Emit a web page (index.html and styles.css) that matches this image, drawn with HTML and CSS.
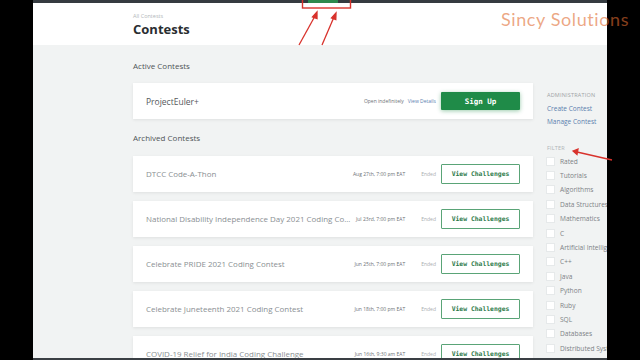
FILE: index.html
```html
<!DOCTYPE html>
<html lang="en">
<head>
    <meta charset="UTF-8">
    <meta name="viewport" content="width=device-width, initial-scale=1.0">
    <title>Contests</title>
    <link rel="stylesheet" href="styles.css">
</head>
<body>
    <div class="screen">
        <div class="topbar"><span class="topbar-tab"></span></div>
        <div class="header">
            <div class="crumb">All Contests</div>
            <h1>Contests</h1>
        </div>
        <div class="page">
            <div class="main">
                <h2 class="section-title">Active Contests</h2>
                <div class="card">
                    <span class="card-title active">ProjectEuler+</span>
                    <span class="meta">Open indefinitely</span>
                    <a class="details" href="#">View Details</a>
                    <button class="btn-signup">Sign Up</button>
                </div>

                <h2 class="section-title archived">Archived Contests</h2>
                <div class="list">
                    <div class="card">
                        <span class="card-title">DTCC Code-A-Thon</span>
                        <span class="meta date">Aug 27th, 7:00 pm EAT</span>
                        <span class="meta ended">Ended</span>
                        <button class="btn-view">View Challenges</button>
                    </div>
                    <div class="card">
                        <span class="card-title">National Disability Independence Day 2021 Coding Co...</span>
                        <span class="meta date">Jul 23rd, 7:00 pm EAT</span>
                        <span class="meta ended">Ended</span>
                        <button class="btn-view">View Challenges</button>
                    </div>
                    <div class="card">
                        <span class="card-title">Celebrate PRIDE 2021 Coding Contest</span>
                        <span class="meta date">Jun 25th, 7:00 pm EAT</span>
                        <span class="meta ended">Ended</span>
                        <button class="btn-view">View Challenges</button>
                    </div>
                    <div class="card">
                        <span class="card-title">Celebrate Juneteenth 2021 Coding Contest</span>
                        <span class="meta date">Jun 18th, 7:00 pm EAT</span>
                        <span class="meta ended">Ended</span>
                        <button class="btn-view">View Challenges</button>
                    </div>
                    <div class="card">
                        <span class="card-title">COVID-19 Relief for India Coding Challenge</span>
                        <span class="meta date">Jun 16th, 9:30 am EAT</span>
                        <span class="meta ended">Ended</span>
                        <button class="btn-view">View Challenges</button>
                    </div>
                </div>
            </div>

            <div class="sidebar">
                <div class="side-label">Administration</div>
                <a class="side-link" href="#">Create Contest</a>
                <a class="side-link" href="#">Manage Contest</a>
                <div class="side-label filter">Filter</div>
                <ul class="filters">
                    <li><span class="box"></span>Rated</li>
                    <li><span class="box"></span>Tutorials</li>
                    <li><span class="box"></span>Algorithms</li>
                    <li><span class="box"></span>Data Structures</li>
                    <li><span class="box"></span>Mathematics</li>
                    <li><span class="box"></span>C</li>
                    <li><span class="box"></span>Artificial Intelligence</li>
                    <li><span class="box"></span>C++</li>
                    <li><span class="box"></span>Java</li>
                    <li><span class="box"></span>Python</li>
                    <li><span class="box"></span>Ruby</li>
                    <li><span class="box"></span>SQL</li>
                    <li><span class="box"></span>Databases</li>
                    <li><span class="box"></span>Distributed Systems</li>
                </ul>
            </div>
        </div>
        <div class="bottombar"></div>
    </div>

    <div class="watermark">Sincy Solutions</div>

    <svg class="annotations" width="640" height="360" viewBox="0 0 640 360">
        <rect x="302.5" y="-2" width="48" height="10" fill="none" stroke="#d8322c" stroke-width="1.4"/>
        <g stroke="#d8322c" stroke-width="1.3" fill="#d8322c">
            <line x1="299" y1="45" x2="315" y2="16"/>
            <polygon points="317,12 312.5,17 317,18.5"/>
            <line x1="322" y1="45" x2="334" y2="17"/>
            <polygon points="336,13 331.5,18 335.8,19.5"/>
            <line x1="612" y1="160" x2="577" y2="152"/>
            <polygon points="573,151 578,149 577,154.5"/>
        </g>
    </svg>
</body>
</html>
```

FILE: styles.css
```css
body {
    margin: 0;
    width: 640px;
    height: 360px;
    background: #000;
    overflow: hidden;
    font-family: 'Open Sans', 'Noto Sans', sans-serif;
    position: relative;
}
.screen {
    margin-left: 33px;
    width: 574px;
    height: 360px;
    background: #f1f3f3;
    display: flex;
    flex-direction: column;
    overflow: hidden;
}
.topbar {
    height: 3px;
    flex-shrink: 0;
    background: #353b40;
    padding-left: 275px;
}
.topbar-tab {
    display: block;
    width: 30px;
    height: 3px;
    background: #2c8a4e;
}
.header {
    height: 42px;
    flex-shrink: 0;
    background: #fff;
    padding: 9px 0 0 100px;
    box-sizing: border-box;
}
.crumb {
    font-size: 5.5px;
    line-height: 8px;
    color: #b3b7ba;
}
h1 {
    margin: 1px 0 0;
    font-size: 13px;
    line-height: 16px;
    font-weight: 700;
    color: #2a2e31;
}
.page {
    flex: 1;
    min-height: 0;
    display: flex;
    padding-left: 100px;
    overflow: hidden;
}
.main {
    width: 400px;
    flex-shrink: 0;
    padding-top: 15px;
}
.section-title {
    margin: 0 0 11px;
    font-size: 8px;
    line-height: 12px;
    font-weight: 400;
    color: #4f5357;
}
.section-title.archived {
    margin: 13px 0 12px;
}
.list {
    display: flex;
    flex-direction: column;
    gap: 9px;
}
.card {
    height: 36px;
    flex-shrink: 0;
    background: #fff;
    box-shadow: 0 1px 3px rgba(0, 0, 0, 0.08);
    display: flex;
    align-items: center;
    padding: 0 13px;
    box-sizing: border-box;
}
.card-title {
    margin-right: 2px;
    font-size: 7.95px;
    color: #8a8f93;
    white-space: nowrap;
}
.card-title.active {
    color: #54585c;
    font-size: 8.5px;
}
.meta {
    font-size: 5px;
    color: #6c7175;
    white-space: nowrap;
    flex-shrink: 0;
}
.card-title + .meta {
    margin-left: auto;
}
.date {
    margin-right: 16px;
}
.ended {
    color: #a9adb0;
    margin-right: 5px;
}
.details {
    font-size: 5px;
    color: #5b80b0;
    text-decoration: none;
    margin: 0 5px 0 4px;
}
button {
    width: 79px;
    flex-shrink: 0;
    font-family: 'DejaVu Sans Mono', monospace;
    font-weight: bold;
    cursor: pointer;
    padding: 0;
}
.btn-signup {
    height: 18px;
    background: #1f8b48;
    color: #fff;
    border: none;
    border-radius: 1px;
    font-size: 7.5px;
    box-shadow: 0 1px 4px rgba(31, 139, 72, 0.45);
}
.btn-view {
    height: 20px;
    background: #fff;
    color: #2e7a4a;
    border: 1px solid #5aa477;
    border-radius: 1px;
    font-size: 6.4px;
}
.sidebar {
    margin-left: 14px;
    padding-top: 46px;
    display: flex;
    flex-direction: column;
    white-space: nowrap;
}
.side-label {
    font-size: 5.5px;
    line-height: 8px;
    color: #9ea3a6;
    text-transform: uppercase;
    letter-spacing: 0.2px;
    margin-bottom: 3px;
}
.side-label.filter {
    margin-top: 16px;
    margin-bottom: 2px;
    color: #b0b4b7;
}
.side-link {
    font-size: 6.5px;
    line-height: 13px;
    color: #5b7fae;
    text-decoration: none;
}
.filters {
    list-style: none;
    margin: 0;
    padding: 0;
}
.filters li {
    height: 14.4px;
    display: flex;
    align-items: center;
    font-size: 6.6px;
    color: #7d8286;
}
.box {
    width: 9px;
    height: 9px;
    background: #fff;
    border: 1px solid #e6e9ea;
    box-sizing: border-box;
    margin: 0 5px 0 -1px;
    flex-shrink: 0;
}
.bottombar {
    height: 2px;
    flex-shrink: 0;
    background: #3a3f44;
}
.watermark {
    position: absolute;
    left: 501px;
    top: 8px;
    font-family: 'Lato', 'DejaVu Sans', sans-serif;
    font-size: 18px;
    letter-spacing: 0.6px;
    color: rgba(224, 108, 48, 0.6);
}
.annotations {
    position: absolute;
    left: 0;
    top: 0;
}
```
